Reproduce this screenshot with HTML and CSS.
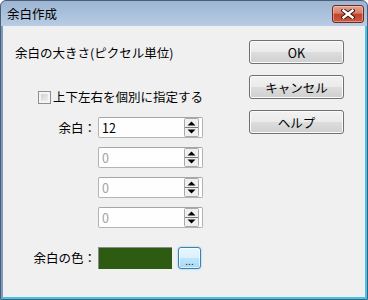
FILE: index.html
```html
<!DOCTYPE html>
<html lang="ja">
<head>
    <meta charset="UTF-8">
    <title>余白作成</title>
<link rel="stylesheet" href="styles.css">
</head>
<body>
<div class="window">
    <div class="titlebar">
        <span class="title">余白作成</span>
        <span class="close_button">
            <svg width="14" height="10" viewBox="0 0 14 10">
                <path d="M2.5 1.5L11.5 8.5M11.5 1.5L2.5 8.5" stroke="#3d1810" stroke-width="4.4" stroke-linecap="square"/>
                <path d="M2.5 1.5L11.5 8.5M11.5 1.5L2.5 8.5" stroke="#ffffff" stroke-width="2.4" stroke-linecap="square"/>
            </svg>
        </span>
    </div>
    <div class="client">
        <div class="settings">
            <div class="heading">余白の大きさ(ピクセル単位)</div>
            <div class="check_row"><span class="checkbox"></span>上下左右を個別に指定する</div>
            <div class="fields">
                <div class="field_row">
                    <span class="field_label">余白：</span>
                    <div class="spin"><span class="spin_value">12</span>
                        <svg class="spin_arrows" width="15" height="19" viewBox="0 0 15 19">
                            <rect x="0.5" y="0.5" width="14" height="18" rx="1" fill="#f0f0f0" stroke="#a9a9a9"/>
                            <path d="M1 9.5H14" stroke="#7a7a7a"/>
                            <path d="M3.5 7.5H11.5L7.5 3.5Z" fill="#000"/>
                            <path d="M3.5 11.5H11.5L7.5 15.5Z" fill="#000"/>
                        </svg>
                    </div>
                </div>
                <div class="field_row">
                    <span class="field_label"></span>
                    <div class="spin"><span class="spin_value disabled">0</span>
                        <svg class="spin_arrows" width="15" height="19" viewBox="0 0 15 19">
                            <rect x="0.5" y="0.5" width="14" height="18" rx="1" fill="#f0f0f0" stroke="#a9a9a9"/>
                            <path d="M1 9.5H14" stroke="#7a7a7a"/>
                            <path d="M3.5 7.5H11.5L7.5 3.5Z" fill="#000"/>
                            <path d="M3.5 11.5H11.5L7.5 15.5Z" fill="#000"/>
                        </svg>
                    </div>
                </div>
                <div class="field_row">
                    <span class="field_label"></span>
                    <div class="spin"><span class="spin_value disabled">0</span>
                        <svg class="spin_arrows" width="15" height="19" viewBox="0 0 15 19">
                            <rect x="0.5" y="0.5" width="14" height="18" rx="1" fill="#f0f0f0" stroke="#a9a9a9"/>
                            <path d="M1 9.5H14" stroke="#7a7a7a"/>
                            <path d="M3.5 7.5H11.5L7.5 3.5Z" fill="#000"/>
                            <path d="M3.5 11.5H11.5L7.5 15.5Z" fill="#000"/>
                        </svg>
                    </div>
                </div>
                <div class="field_row">
                    <span class="field_label"></span>
                    <div class="spin"><span class="spin_value disabled">0</span>
                        <svg class="spin_arrows" width="15" height="19" viewBox="0 0 15 19">
                            <rect x="0.5" y="0.5" width="14" height="18" rx="1" fill="#f0f0f0" stroke="#a9a9a9"/>
                            <path d="M1 9.5H14" stroke="#7a7a7a"/>
                            <path d="M3.5 7.5H11.5L7.5 3.5Z" fill="#000"/>
                            <path d="M3.5 11.5H11.5L7.5 15.5Z" fill="#000"/>
                        </svg>
                    </div>
                </div>
                <div class="field_row color_row">
                    <span class="field_label">余白の色：</span>
                    <span class="swatch"></span>
                    <span class="pick_button">...</span>
                </div>
            </div>
        </div>
        <div class="actions">
            <button class="dialog_button">OK</button>
            <button class="dialog_button">キャンセル</button>
            <button class="dialog_button">ヘルプ</button>
        </div>
    </div>
</div>
</body>
</html>
```
FILE: styles.css
```css
body{
    margin: 0;
    font-family: "Noto Sans CJK JP", "Noto Sans", sans-serif;
    font-size: 12.5px;
    color: black;
}

.window{
    width: 368px;
    height: 300px;
    box-sizing: border-box;
    border: 1px solid #4d5d72;
    border-radius: 6px 6px 0 0;
    background: linear-gradient(#9cb5d3, #b9cde4 26px, #b5cbe4);
    display: flex;
    flex-direction: column;
    overflow: hidden;
}

.titlebar{
    height: 25px;
    flex: none;
    display: flex;
    justify-content: space-between;
    padding: 0 3px 0 6px;
}

.title{
    line-height: 25px;
}

.close_button{
    width: 32px;
    height: 18px;
    margin-top: 4px;
    box-sizing: border-box;
    border: 1px solid #6e2b20;
    border-radius: 3px;
    background: linear-gradient(#e6a593 0%, #d67c67 45%, #c2432c 52%, #c9593f 100%);
    box-shadow: inset 0 0 0 1px rgba(255, 220, 210, 0.45);
    display: flex;
    align-items: center;
    justify-content: center;
}

.client{
    flex: 1;
    display: flex;
    justify-content: space-between;
    background-color: #f0f0f0;
    border-left: 2px solid #7d9bc1;
    border-right: 2px solid #3fc5ef;
    border-bottom: 2px solid #3fc5ef;
}

.settings{
    padding-top: 19px;
}

.heading{
    margin-left: 12px;
    line-height: 16px;
}

.check_row{
    display: flex;
    align-items: center;
    gap: 2px;
    margin: 28px 0 12px 35px;
    line-height: 16px;
}

.checkbox{
    width: 13px;
    height: 13px;
    box-sizing: border-box;
    border: 1px solid #8e8f8f;
    background: linear-gradient(135deg, #c6cacf, #f6f6f6);
    box-shadow: inset 0 0 0 2px #f4f4f4;
}

.fields{
    display: flex;
    flex-direction: column;
    gap: 9px;
}

.field_row{
    display: flex;
    align-items: center;
    gap: 2px;
}

.field_label{
    width: 93px;
    text-align: right;
    line-height: 16px;
}

.spin{
    width: 105px;
    height: 21px;
    box-sizing: border-box;
    border: 1px solid #b3b3b3;
    border-top-color: #a6a6a6;
    border-radius: 2px;
    background-color: #fefefe;
    display: flex;
    align-items: center;
    justify-content: space-between;
    padding: 0 3px;
}

.spin_value{
    line-height: 16px;
}

.spin_value.disabled{
    color: #a3a3a3;
}

.spin_arrows{
    display: block;
}

.color_row{
    margin-top: 10px;
}

.swatch{
    width: 74px;
    height: 22px;
    box-sizing: border-box;
    background-color: #2d5b12;
    border-top: 1px solid #8a8a8a;
    border-left: 1px solid #8a8a8a;
}

.pick_button{
    width: 23px;
    height: 22px;
    margin-left: 4px;
    box-sizing: border-box;
    border: 1px solid #3c7fb1;
    border-radius: 3px;
    background: linear-gradient(#eaf6fd 0%, #d9f0fc 50%, #bee6fd 52%, #a7d9f5 100%);
    box-shadow: 0 0 2px #62c6f2, inset 0 0 0 1px rgba(255, 255, 255, 0.6);
    font-size: 10px;
    line-height: 26px;
    text-align: center;
    color: #1c2a36;
}

.actions{
    display: flex;
    flex-direction: column;
    gap: 11px;
    padding: 14px 21px 0 0;
}

.dialog_button{
    width: 95px;
    height: 24px;
    padding: 0;
    border: 1px solid #707070;
    border-radius: 3px;
    background: linear-gradient(#f2f2f2 0%, #ebebeb 48%, #dddddd 52%, #cfcfcf 100%);
    box-shadow: inset 0 0 0 1px #fbfbfb;
    font-family: "Noto Sans CJK JP", "Noto Sans", sans-serif;
    font-size: 12.5px;
    color: black;
}
```
